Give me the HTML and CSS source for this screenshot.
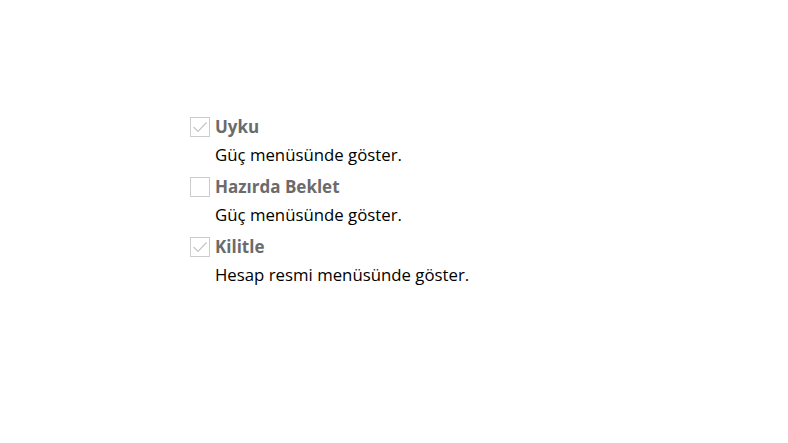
FILE: index.html
```html
<!DOCTYPE html>
<html lang="tr">
<head>
<meta charset="utf-8">
<link rel="stylesheet" href="styles.css">
</head>
<body>
<div class="list">
  <div class="item">
    <div class="head">
      <span class="box"><svg viewBox="0 0 20 20" width="20" height="20"><path d="M3.5 10 L8 14.5 L16.5 5.5" fill="none" stroke="#c4c4c4" stroke-width="1.1"/></svg></span>
      <span class="label">Uyku</span>
    </div>
    <div class="desc">Güç menüsünde göster.</div>
  </div>
  <div class="item">
    <div class="head">
      <span class="box"></span>
      <span class="label">Hazırda Beklet</span>
    </div>
    <div class="desc">Güç menüsünde göster.</div>
  </div>
  <div class="item">
    <div class="head">
      <span class="box"><svg viewBox="0 0 20 20" width="20" height="20"><path d="M3.5 10 L8 14.5 L16.5 5.5" fill="none" stroke="#c4c4c4" stroke-width="1.1"/></svg></span>
      <span class="label">Kilitle</span>
    </div>
    <div class="desc">Hesap resmi menüsünde göster.</div>
  </div>
</div>
</body>
</html>
```
FILE: styles.css
```css
html, body {
  margin: 0;
  padding: 0;
  background: #ffffff;
}
body {
  font-family: "Open Sans", "Noto Sans", sans-serif;
  font-size: 16.8px;
  color: #000;
}
.list {
  padding: 116px 0 0 190px;
  display: flex;
  flex-direction: column;
  gap: 4px;
}
.item {
  display: flex;
  flex-direction: column;
}
.head {
  display: flex;
  align-items: center;
  gap: 5px;
  height: 22px;
}
.box {
  box-sizing: border-box;
  width: 20px;
  height: 20px;
  border: 1px solid #cccccc;
  display: block;
  position: relative;
}
.box svg {
  position: absolute;
  left: -1px;
  top: -1px;
}
.label {
  font-weight: 700;
  color: #6b6b6b;
  font-size: 17px;
  margin-top: -1px;
}
.desc {
  padding-left: 25px;
  height: 34px;
  line-height: 33px;
}
```
